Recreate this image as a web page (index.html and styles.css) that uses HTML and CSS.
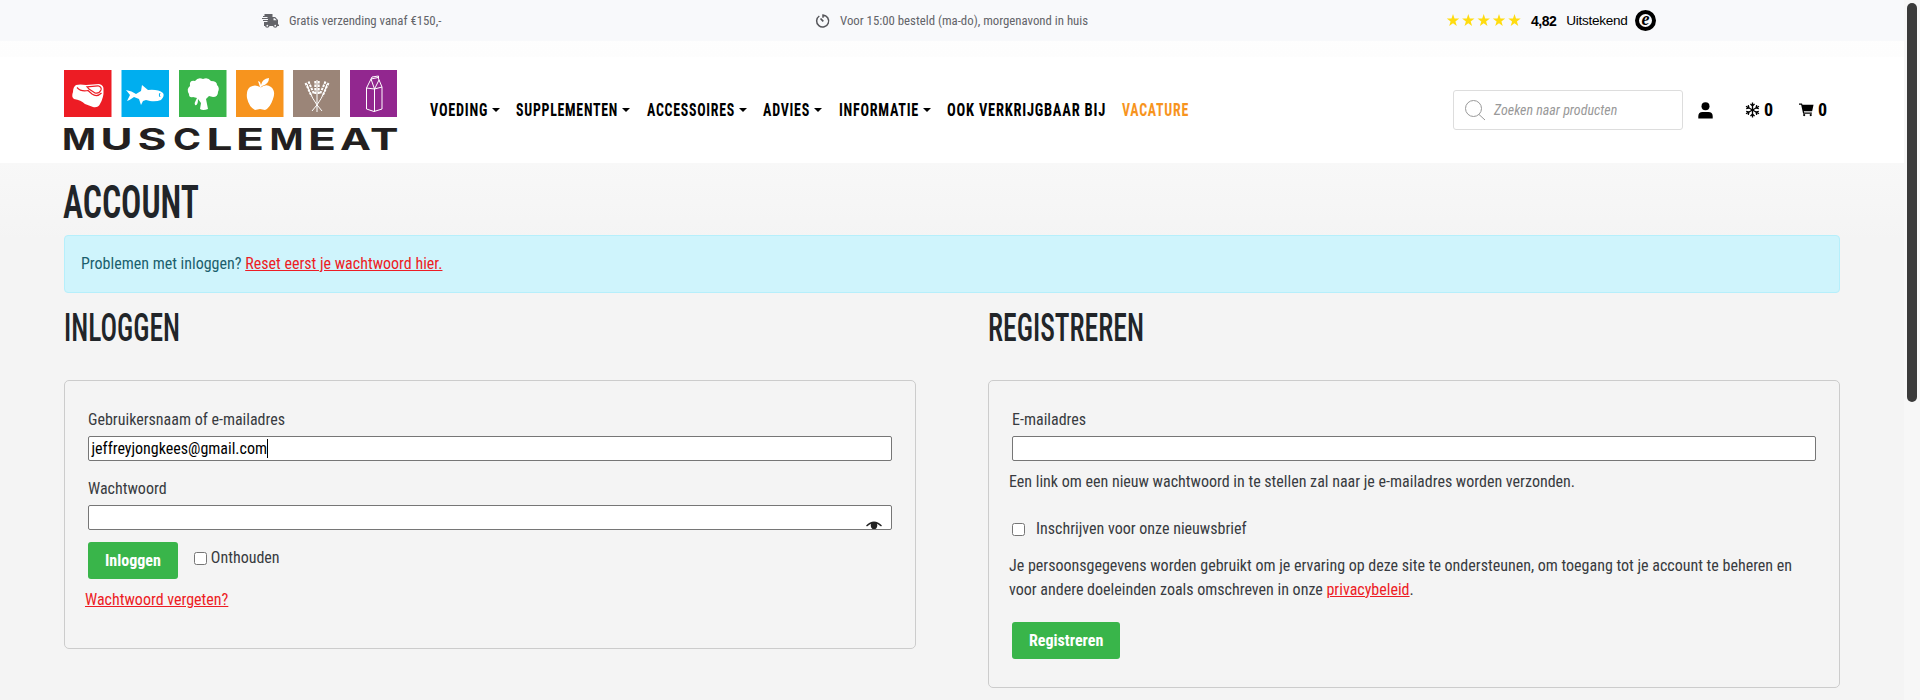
FILE: index.html
```html
<!DOCTYPE html>
<html lang="nl">
<head>
<meta charset="utf-8">
<title>Account - Musclemeat</title>
<link rel="stylesheet" href="styles.css">
</head>
<body>
<div class="page">
  <div class="topbar">
    <div class="usp usp-ship">
      <svg width="17" height="14" viewBox="0 0 17 14"><path fill="#636469" d="M2.500 0h8v3h2.600L16 6v4.600h1V12h-1.500a2.300 2.300 0 0 1-4.500 0H7.500A2.300 2.300 0 0 1 3 12H2V8h3.500V7H1V6h5V5H0V4h5.500V3H1V2h1.500z"/><path fill="#f8f9fb" d="M11.500 4.200h1.200l2 2.100h-3.200z"/><circle cx="5.300" cy="11.700" r=".9" fill="#f8f9fb"/><circle cx="13.200" cy="11.700" r=".9" fill="#f8f9fb"/></svg>
      <span>Gratis verzending vanaf €150,-</span>
    </div>
    <div class="usp usp-time">
      <svg width="14" height="14" viewBox="0 0 14 14" fill="none" stroke="#55565a" stroke-width="1.500"><path d="M3.300 2A6 6 0 1 0 7 1v2.700"/><path d="M4.500 4.500 7.300 7.300" stroke-width="1.700"/></svg>
      <span>Voor 15:00 besteld (ma-do), morgenavond in huis</span>
    </div>
    <div class="usp usp-rating">
      <svg class="stars" width="74" height="13" viewBox="0 0 74 13" fill="#ffdc0f"><defs><path id="st" d="M6 0 7.500 4.500H12.200L8.400 7.400 9.800 12 6 9.200 2.200 12 3.600 7.400-.2 4.500H4.500z"/></defs><use href="#st"/><use href="#st" x="15.300"/><use href="#st" x="30.700"/><use href="#st" x="46"/><use href="#st" x="61.500"/></svg>
      <b>4,82</b><span class="mark">Uitstekend</span><i class="seal">e</i>
    </div>
  </div>

  <header class="header">
    <svg class="logo" width="334" height="82" viewBox="0 0 334 82">
      <rect width="47.500" height="47" fill="#ed1c24"/>
      <rect x="57.500" width="47.500" height="47" fill="#00aeef"/>
      <rect x="115" width="47.500" height="47" fill="#39b54a"/>
      <rect x="172" width="47.500" height="47" fill="#f7941e"/>
      <rect x="229" width="47" height="47" fill="#9b8578"/>
      <rect x="286" width="47" height="47" fill="#92278f"/>
      <g fill="#fff">
        <path d="M12 15Q16 14 22 15L35 14Q40 15 39.500 20 40 27 36 34 34 38 29 37L21 34Q17 30 10 29 7 27 9 22 9 17 12 15z"/>
        <path d="M62 20Q68 21 72 24L77 21 78 15 84 20Q94 19 99 23 101 26 97 30 92 32 86 31L82 30 79 31 77 35 75 29 70 27Q66 30 63 31L66 25z"/>
        <path d="M125 24Q122 19 126 16 125 10 131 11 134 7 139 9 144 7 147 11 153 11 153 15 156 18 154 22 154 27 149 27L145 26 142 29 144 39Q139 41 136 39L137 33 134 29Q134 36 131 35 130 33 132 30L133 28 129 27Q125 28 125 24z"/>
        <path d="M196 18Q202 13 207 17 212 21 209 29 206 38 201 40L196 39 191 40Q185 37 183 28 182 20 186 17 191 14 196 17L194 11 196 12 197 15Q198 9 205 8 205 14 198 16z"/>
      </g>
      <path d="M13 17.500Q17 22 24 20.500L28 24Q33 27.500 37.500 23" fill="none" stroke="#ed1c24" stroke-width="1.200"/>
      <path d="M23 16.800 34 15.800Q38 17 37 20 35 24 31 23L25 19z" fill="none" stroke="#ed1c24" stroke-width="1.200"/>
      <path d="M96 23q-1.500 2 0 4" fill="none" stroke="#00aeef"/>
      <g fill="none" stroke="#fff">
        <path d="M253 10V42M243 14Q247 29 258 41M263 14Q259 29 248 41"/>
        <path stroke-width="2" stroke-dasharray="2.500 1" d="M251.300 11V24M254.700 11V24M241.500 13 247.500 26M244.500 11.500 250 24M264.500 13 258.500 26M261.500 11.500 256 24"/>
        <path d="M302.500 18V39L310 41.500 318 39V17L310.500 19 302.500 18 307 9 314 7.500 318 17M307 9 310.500 19V41.500M310.500 19 315 10M307 9 308 7 314.500 6V8"/>
      </g>
      <text class="wordmark" y="80"><tspan x="-2" textLength="34" lengthAdjust="spacingAndGlyphs">M</tspan><tspan x="36.500" textLength="32" lengthAdjust="spacingAndGlyphs">U</tspan><tspan x="73.500" textLength="29" lengthAdjust="spacingAndGlyphs">S</tspan><tspan x="109" textLength="28" lengthAdjust="spacingAndGlyphs">C</tspan><tspan x="142.500" textLength="26" lengthAdjust="spacingAndGlyphs">L</tspan><tspan x="172" textLength="28" lengthAdjust="spacingAndGlyphs">E</tspan><tspan x="205.500" textLength="34" lengthAdjust="spacingAndGlyphs">M</tspan><tspan x="244" textLength="28" lengthAdjust="spacingAndGlyphs">E</tspan><tspan x="276" textLength="31" lengthAdjust="spacingAndGlyphs">A</tspan><tspan x="306" textLength="28.500" lengthAdjust="spacingAndGlyphs">T</tspan></text>
    </svg>

    <nav class="nav">
      <a><svg width="58" height="24"><text y="19" textLength="58" lengthAdjust="spacingAndGlyphs">VOEDING</text></svg><i></i></a>
      <a><svg width="102" height="24"><text y="19" textLength="102" lengthAdjust="spacingAndGlyphs">SUPPLEMENTEN</text></svg><i></i></a>
      <a><svg width="88" height="24"><text y="19" textLength="88" lengthAdjust="spacingAndGlyphs">ACCESSOIRES</text></svg><i></i></a>
      <a><svg width="47" height="24"><text y="19" textLength="47" lengthAdjust="spacingAndGlyphs">ADVIES</text></svg><i></i></a>
      <a><svg width="80" height="24"><text y="19" textLength="80" lengthAdjust="spacingAndGlyphs">INFORMATIE</text></svg><i></i></a>
      <a><svg width="159" height="24"><text y="19" textLength="159" lengthAdjust="spacingAndGlyphs">OOK VERKRIJGBAAR BIJ</text></svg></a>
      <a class="hot"><svg width="67" height="24"><text y="19" textLength="67" lengthAdjust="spacingAndGlyphs">VACATURE</text></svg></a>
    </nav>

    <div class="search">
      <svg width="21" height="21" viewBox="0 0 21 21" fill="none" stroke="#999"><circle cx="8.500" cy="8.500" r="8"/><path d="M14 14.500 20 20"/></svg>
      <span>Zoeken naar producten</span>
    </div>
    <div class="tools">
      <svg class="user" width="15" height="17" viewBox="0 0 15 17"><circle cx="7.500" cy="4.200" r="4"/><path d="M.3 16.500V14Q.5 10 4.500 10h6Q14.500 10 14.700 14V16.500z"/></svg>
      <svg class="snow" width="15" height="16" viewBox="0 0 16 16" fill="none" stroke="#000" stroke-width="1.400"><g id="fl"><path d="M8 0V16M5.800 1.500 8 3.700 10.200 1.500M5.800 14.500 8 12.300 10.200 14.500"/></g><use href="#fl" transform="rotate(60 8 8)"/><use href="#fl" transform="rotate(120 8 8)"/></svg>
      <b>0</b>
      <svg class="cart" width="15" height="14" viewBox="0 0 16 14"><path d="M0 0H3.200L3.700 1.500H15.500L14 8.300H5.200L5.500 9.700H13.700V11H4.400L2.300 1.400H0z"/><circle cx="5.500" cy="12.400" r="1.200"/><circle cx="12.500" cy="12.400" r="1.200"/></svg>
      <b>0</b>
    </div>
  </header>

  <main class="main">
    <h1><svg width="140" height="48"><text y="39" x="-1" textLength="136" lengthAdjust="spacingAndGlyphs">ACCOUNT</text></svg></h1>
    <div class="alert">Problemen met inloggen? <a>Reset eerst je wachtwoord hier.</a></div>
    <div class="columns">
      <section>
        <h2><svg width="120" height="40"><text x="0" y="33" textLength="116" lengthAdjust="spacingAndGlyphs">INLOGGEN</text></svg></h2>
        <div class="card login">
          <label>Gebruikersnaam of e-mailadres</label>
          <div class="field">jeffreyjongkees@gmail.com<span class="caret"></span></div>
          <label class="second">Wachtwoord</label>
          <div class="field"><svg class="eye" width="16" height="8" viewBox="0 0 16 8"><path d="M.5 5Q8-2.500 15.500 5" fill="none" stroke="#222" stroke-width="1.200"/><path d="M5 2.200Q8 0 11 2.200 12 6 9.500 8H6.500Q4 6 5 2.200z" fill="#222"/></svg></div>
          <div class="actions"><button class="btn">Inloggen</button><label class="check"><span class="box"></span>Onthouden</label></div>
          <a class="lost">Wachtwoord vergeten?</a>
        </div>
      </section>
      <section>
        <h2><svg width="160" height="40"><text x="0" y="33" textLength="156" lengthAdjust="spacingAndGlyphs">REGISTREREN</text></svg></h2>
        <div class="card register">
          <label>E-mailadres</label>
          <div class="field"></div>
          <p>Een link om een nieuw wachtwoord in te stellen zal naar je e-mailadres worden verzonden.</p>
          <label class="news"><span class="box"></span>Inschrijven voor onze nieuwsbrief</label>
          <p class="privacy">Je persoonsgegevens worden gebruikt om je ervaring op deze site te ondersteunen, om toegang tot je account te beheren en voor andere doeleinden zoals omschreven in onze <a>privacybeleid</a>.</p>
          <button class="btn">Registreren</button>
        </div>
      </section>
    </div>
  </main>
</div>
<div class="scrollbar"><div class="thumb"></div></div>
</body>
</html>
```
FILE: styles.css
```css
* { box-sizing: border-box; }
body {
  margin: 0; height: 700px; overflow: hidden; display: flex;
  font: 400 16px/24px "Roboto Condensed", Roboto, sans-serif;
  color: #383b40;
  background: linear-gradient(#fefefe 0, #fdfdfd 60px, #f8f8f8 163px, #f4f4f4 240px);
}
svg { display: block; overflow: visible; flex: none; }
.page { width: 1904px; flex: none; }
.topbar { height: 41px; background: #f8f9fb; display: grid; grid-template-columns: 816px 631px 1fr; align-items: center; }
.usp { display: flex; align-items: center; font-size: 12.8px; color: #636469; white-space: nowrap; }
.usp-ship { padding-left: 262px; gap: 10px; }
.usp-time { gap: 10px; }
.usp-rating { font-family: "Liberation Sans", Arial, sans-serif; font-size: 14px; color: #000; }
.usp-rating b { margin-left: 10px; font-size: 14px; letter-spacing: -.5px; }
.mark { margin-left: 10px; font-size: 13.6px; letter-spacing: -.3px; }
.seal {
  width: 21px; height: 21px; margin-left: 8px; border: 4px solid #000; border-radius: 50%;
  font: italic 700 18px/10px "Liberation Serif", serif; text-align: center; padding-right: 1px;
}
.header { height: 106px; margin-top: 16px; padding-left: 64px; background: #fff; display: flex; align-items: flex-start; }
.logo { margin-top: 13px; }
.wordmark { font: 700 30.5px Inter, sans-serif; fill: #231f20; }
.nav { display: flex; margin: 40px 0 0 32px; gap: 14.4px; width: 1023px; }
.nav a { display: flex; align-items: center; height: 24px; }
.nav text { font-weight: 700; font-size: 19px; fill: #000; letter-spacing: 1px; }
.nav .hot { margin-left: 1.5px; }
.nav .hot text { fill: #f7941e; }
.nav i { margin: 1px 2px 0 4px; border: 4px solid transparent; border-top-color: #000; border-bottom: 0; }
.search {
  width: 230px; height: 40px; margin-top: 33px; padding: 0 11px; border: 1px solid #ddd; border-radius: 3px;
  display: flex; align-items: center; gap: 8px; font-size: 14px; font-style: italic; color: #999;
}
.tools { display: flex; align-items: center; height: 24px; margin: 41px 0 0 15px; color: #000; font-size: 18px; }
.snow { margin-left: 32px; }
.tools b { margin-left: 4px; width: 10px; }
.cart { margin-left: 25px; }
.main { padding: 0 64px; }
h1, h2 { margin: 0; font-size: 0; }
h1 { padding-top: 16px; height: 72px; }
h1 text { font-size: 46px; font-weight: 600; fill: #212529; }
h2 text { font-size: 38px; font-weight: 500; fill: #212529; }
.alert { height: 58px; padding: 16px; border: 1px solid #b6effb; border-radius: 4px; background: #cff4fc; color: #1b5f6d; }
a { color: #ed1c24; }
.alert a, .lost, .privacy a { text-decoration: underline; }
.columns { display: grid; grid-template-columns: 852px 852px; gap: 72px; padding-top: 15px; align-items: start; }
h2 { height: 72px; }
.card { border: 1px solid #ccc; border-radius: 5px; padding: 27px 20px 0; }
.login { height: 269px; }
.register { height: 308px; }
.card > label, .card > .field, .actions { margin-left: 3px; }
.card > label { display: block; height: 24px; }
.field {
  position: relative; width: 804px; height: 25px; margin-top: 4px; padding: 0 2.5px; display: flex; align-items: center;
  border: 1px solid #767676; border-radius: 2px; background: #fff; color: #000;
}
.caret { width: 1px; height: 19px; background: #000; }
.card > .second { margin-top: 16px; }
.eye { position: absolute; right: 9px; bottom: 0; }
.actions { display: flex; align-items: flex-start; margin-top: 12px; }
.btn {
  height: 37px; padding: 0 17px; border: 0; border-radius: 3px; background: #39b54a; color: #fff;
  font: 700 16px/37px "Roboto Condensed", Roboto, sans-serif; display: block;
}
.box { width: 13px; height: 13px; border: 1px solid #767676; border-radius: 2.5px; background: #fff; flex: none; }
.check { display: flex; align-items: center; gap: 4px; margin: 4px 0 0 16px; }
.lost { display: block; margin-top: 9px; width: max-content; }
p { margin: 9px 0 0; }
.card > .news { display: flex; align-items: center; gap: 11px; margin-top: 23px; }
.privacy { margin-top: 13px; width: 800px; }
.register .btn { margin: 20px 0 0 3px; }
.scrollbar { width: 16px; background: #f7f7f7; padding: 3px; }
.thumb { width: 10px; height: 399px; border-radius: 5px; background: #3a3a3a; }
```
